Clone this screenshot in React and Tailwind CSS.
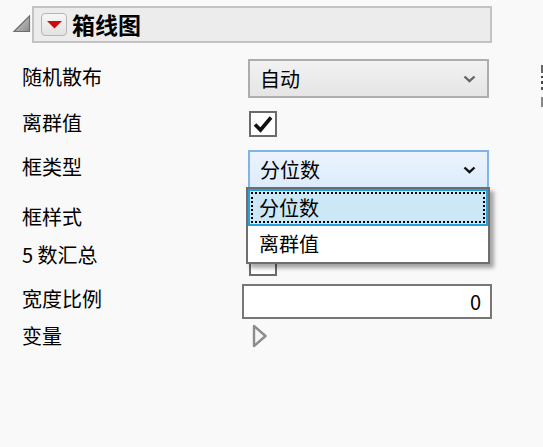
import React from "react";

const Chevron = ({ color }) => (
  <svg width="13" height="8" viewBox="0 0 13 8" className="shrink-0">
    <polyline points="1.5,1.5 6.5,6.2 11.5,1.5" fill="none" stroke={color} strokeWidth="2.4" />
  </svg>
);

const Select = ({ value, focused }) => (
  <div
    className={`flex h-[39px] w-[241px] items-center justify-between border-2 pl-[10px] pr-[11px] text-[20px] leading-none ${
      focused
        ? "border-[#7eb4ea] bg-gradient-to-b from-[#ecf4fc] to-[#dcecfc]"
        : "border-[#adadad] bg-gradient-to-b from-[#f2f2f2] to-[#e5e5e5]"
    }`}
  >
    <span>{value}</span>
    <Chevron color={focused ? "#111" : "#666"} />
  </div>
);

const Checkbox = ({ checked }) => (
  <div className="flex h-[26px] w-[28px] items-center justify-center border-2 border-[#6b6b6b] bg-white">
    {checked && (
      <svg width="22" height="20" viewBox="0 0 22 20">
        <polyline points="3,10.5 8.5,16 19,3.5" fill="none" stroke="#111" strokeWidth="3.6" />
      </svg>
    )}
  </div>
);

const Row = ({ label, height, labelClass = "", children, className = "" }) => (
  <div className={`flex items-center ${className}`} style={{ height }}>
    <div className={`w-[226px] shrink-0 text-[20px] leading-none ${labelClass}`}>{label}</div>
    <div className="flex items-center">{children}</div>
  </div>
);

export default function App() {
  return (
    <div className="relative h-[447px] w-[543px] overflow-hidden bg-[#f9f9f9] text-black font-['Noto_Sans_CJK_SC','Noto_Sans',sans-serif]">
      {/* header */}
      <div className="flex items-center pl-[12px] pt-[6px]">
        <svg width="20" height="20" viewBox="0 0 20 20" className="-mt-[1px]">
          <defs>
            <linearGradient id="tri" x1="0" y1="0" x2="1" y2="1">
              <stop offset="0" stopColor="#d8d8d8" />
              <stop offset="1" stopColor="#8a8a8a" />
            </linearGradient>
          </defs>
          <polygon points="17.5,2 17.5,17.5 2,17.5" fill="url(#tri)" stroke="#6f6f6f" strokeWidth="1.2" />
        </svg>
        <div className="flex h-[37px] w-[460px] items-center border-2 border-[#c3c3c3] bg-[#ececec] pl-[7px]">
          <div className="flex h-[23px] w-[26px] items-center justify-center rounded-[4px] border border-[#b5b5b5] bg-gradient-to-b from-[#f7f7f7] to-[#e2e2e2]">
            <svg width="15" height="8" viewBox="0 0 15 8">
              <polygon points="0,0 15,0 7.5,7.5" fill="#d40a0a" />
            </svg>
          </div>
          <span className="ml-[5px] text-[23px] font-bold leading-none">箱线图</span>
        </div>
      </div>

      {/* rows */}
      <div className="mt-[16px] pl-[22px]">
        <Row label="随机散布" height={39} labelClass="pb-[4px]">
          <Select value="自动" />
        </Row>
        <Row label="离群值" height={52} labelClass="pb-[3px]">
          <div className="pl-[1px]">
            <Checkbox checked />
          </div>
        </Row>
        <Row label="框类型" height={39} labelClass="pb-[6px]">
          <Select value="分位数" focused />
        </Row>
        <Row label="框样式" height={56} />
        <Row label="5 数汇总" height={36} labelClass="pb-[16px]">
          <div className="pl-[1px]">
            <Checkbox />
          </div>
        </Row>
        <Row label="宽度比例" height={35} className="mt-[3px]" labelClass="pb-[6px]">
          <div className="-ml-[6px] flex h-[35px] w-[250px] items-center justify-end border-2 border-[#777] bg-white pr-[9px] text-[20px] leading-none">
            0
          </div>
        </Row>
        <Row label="变量" height={34}>
          <svg width="16" height="24" viewBox="0 0 16 24" className="ml-[4px]">
            <polygon points="2,2 13.5,12 2,22" fill="#f4f4f4" stroke="#8c8c8c" strokeWidth="2.4" strokeLinejoin="round" />
          </svg>
        </Row>
      </div>

      {/* open list of 框类型 */}
      <div className="absolute left-[246px] top-[187px] w-[244px] border-2 border-[#6e6e6e] bg-white text-[20px] leading-none shadow-[4px_4px_4px_rgba(0,0,0,0.35)]">
        <div className="relative flex h-[37px] items-center border-2 border-[#26a0da] bg-[#cce8f6] pl-[9px]">
          <div className="absolute inset-[1px] border-2 border-dotted border-black" />
          <span className="relative">分位数</span>
        </div>
        <div className="flex h-[36px] items-center pl-[11px]">离群值</div>
      </div>

      {/* clipped item at right edge */}
      <div className="absolute right-0 top-[65px] flex w-[2px] flex-col gap-[3px]">
        <div className="h-[8px] bg-[#666]" />
        <div className="h-[2px] bg-[#444]" />
        <div className="h-[3px] bg-[#444]" />
        <div className="h-[3px] bg-[#555]" />
        <div className="mt-[4px] h-[10px] bg-[#888]" />
      </div>
    </div>
  );
}
